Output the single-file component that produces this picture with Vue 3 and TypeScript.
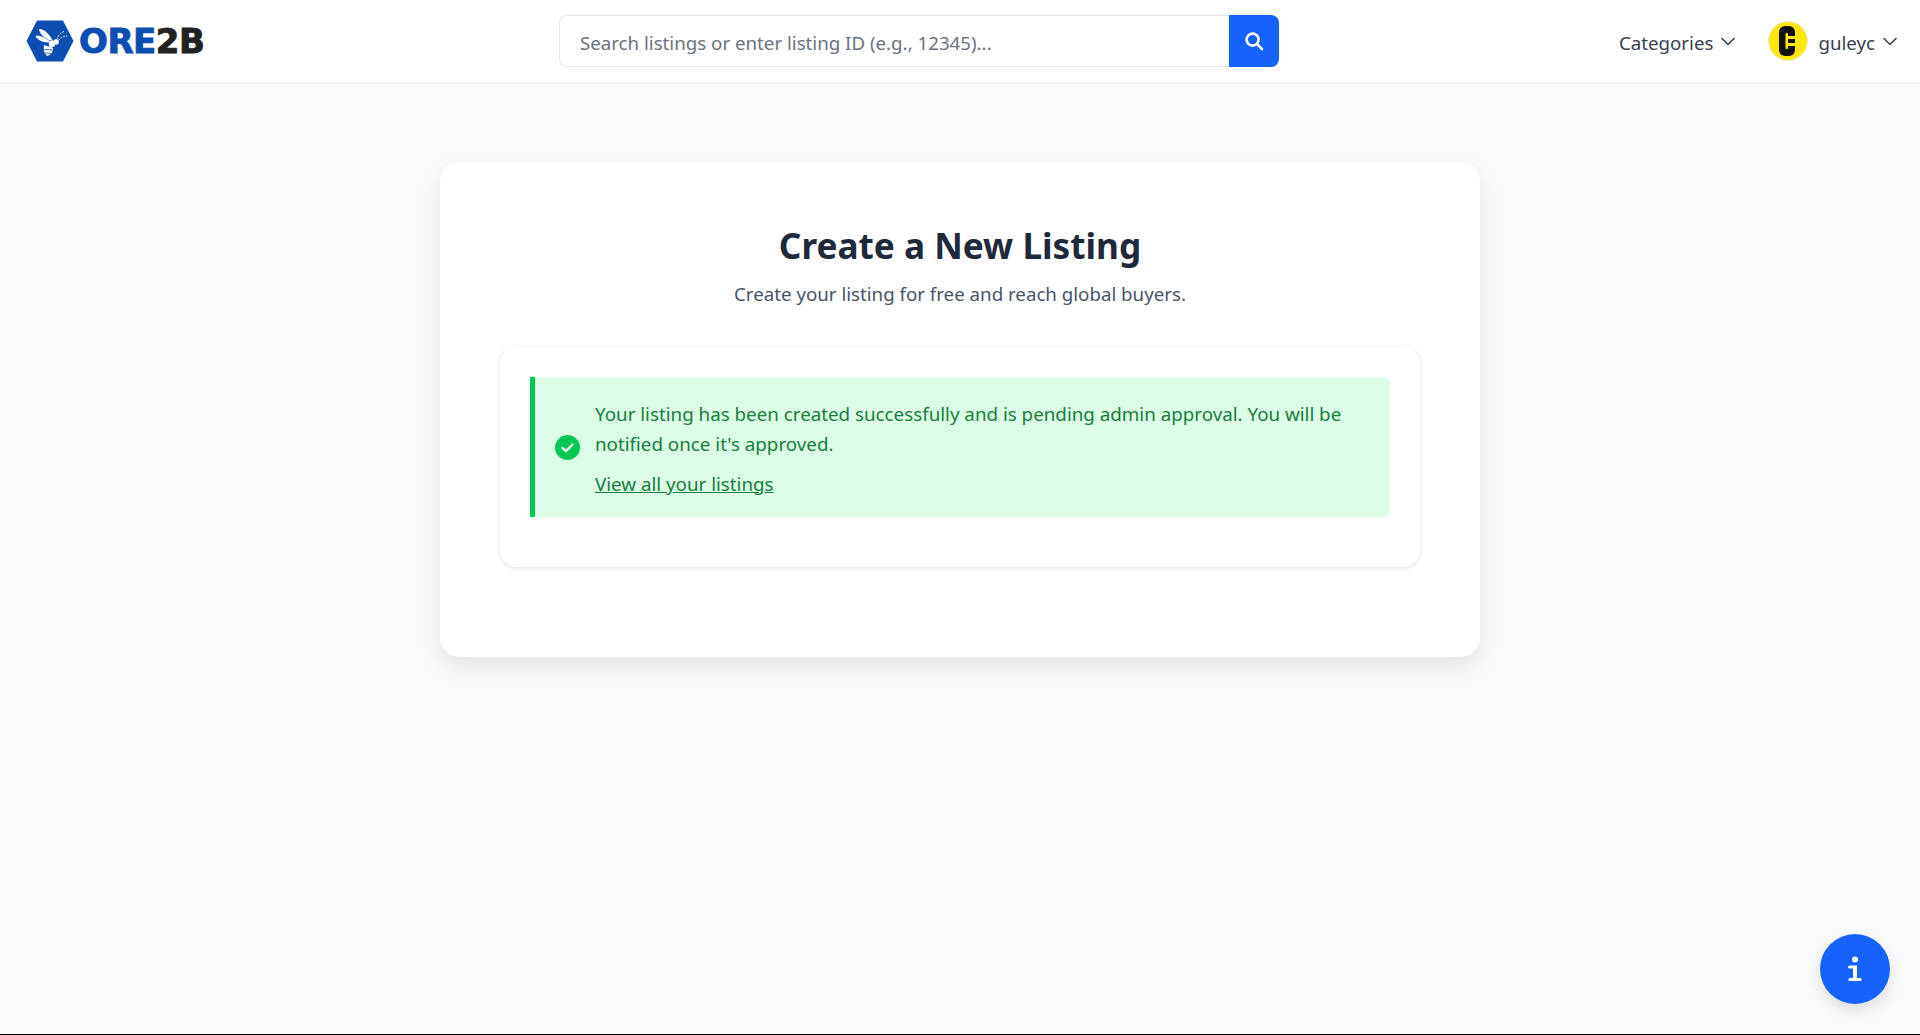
<template>
  <div class="page">
    <header class="topbar">
      <a class="logo" href="#">
        <svg class="logo-mark" width="48" height="42" viewBox="0 0 48 42">
          <path d="M11 0.500h26l10.500 20.500-10.500 20.500H11L0.500 21z" fill="#0b4db0" />
          <path d="M13 9c4-1 11 5 14 12-6-1-13-5-14-12z" fill="#fff" />
          <path d="M9.500 16c4.500-1 10.500 2 15.500 6-6 1.500-13-1-15.500-6z" fill="#fff" />
          <path d="M18 25c3 1 8 2 9 3 0 4-2 7-6 8-3-3-4-7-3-11z" fill="#fff" />
          <path d="M18.500 29.500l8 0.500M19.500 33l5.500 0.500" stroke="#0b4db0" stroke-width="0.8" />
          <circle cx="26" cy="24" r="3.200" fill="#fff" />
          <circle cx="30" cy="22" r="2.800" fill="#fff" />
          <path d="M31 19.500c1-4 4-7 8-8.500M32.500 20.500c1.500-2.500 4.500-4.500 8.500-4.500" fill="none" stroke="#fff" stroke-width="0.9" stroke-dasharray="2 1" />
        </svg>
        <span class="logo-text"><span class="logo-blue">ORE</span><span class="logo-dark">2B</span></span>
      </a>
      <form class="search" @submit.prevent>
        <input class="search-input" type="text" placeholder="Search listings or enter listing ID (e.g., 12345)..." />
        <button class="search-btn" type="submit" aria-label="Search">
          <svg width="20" height="20" viewBox="0 0 20 20" fill="none" stroke="#fff" stroke-width="2.600" stroke-linecap="round">
            <circle cx="8.600" cy="8.600" r="6" />
            <path d="M13.200 13.200 18 18" />
          </svg>
        </button>
      </form>
      <nav class="nav">
        <button class="nav-item" type="button">
          <span class="nav-label">Categories</span>
          <svg class="chev" width="14" height="9" viewBox="0 0 14 9"><path d="M1 1.500 7 7.500l6-6" /></svg>
        </button>
        <button class="nav-item user" type="button">
          <svg class="avatar" width="40" height="40" viewBox="0 0 40 40">
            <circle cx="20" cy="20" r="19.500" fill="#ffe900" stroke="#e5e7eb" />
            <rect x="11" y="5" width="16" height="30" rx="6" fill="#111" />
            <rect x="17.500" y="12" width="2.500" height="16" rx="1" fill="#ffe900" />
            <rect x="20" y="15" width="7" height="3" fill="#ffe900" />
            <rect x="20" y="22" width="7" height="3" fill="#ffe900" />
          </svg>
          <span class="nav-label">guleyc</span>
          <svg class="chev" width="14" height="9" viewBox="0 0 14 9"><path d="M1 1.500 7 7.500l6-6" /></svg>
        </button>
      </nav>
    </header>

    <main class="main">
      <section class="panel">
        <h1 class="title">Create a New Listing</h1>
        <p class="subtitle">Create your listing for free and reach global buyers.</p>
        <div class="inner">
          <div class="alert">
            <svg class="alert-icon" width="25" height="25" viewBox="0 0 25 25">
              <circle cx="12.500" cy="12.500" r="12.500" fill="#00c853" />
              <path d="M7.500 13l3.400 3.200 6.600-6.700" fill="none" stroke="#fff" stroke-width="2.400" stroke-linecap="round" stroke-linejoin="round" />
            </svg>
            <div class="alert-body">
              <p class="alert-text">Your listing has been created successfully and is pending admin approval. You will be notified once it's approved.</p>
              <a class="alert-link" href="#">View all your listings</a>
            </div>
          </div>
        </div>
      </section>
    </main>

    <footer class="footer"></footer>

    <button class="fab" type="button" aria-label="Info">
      <svg width="14" height="26" viewBox="0 0 14 26" fill="#fff">
        <circle cx="7" cy="3.500" r="3" />
        <path d="M1.500 9.500H9v12.500h3.200a1.400 1.400 0 0 1 0 3H1.800a1.400 1.400 0 0 1 0-3H5V12.500H1.500a1.500 1.500 0 0 1 0-3z" />
      </svg>
    </button>
  </div>
</template>

<script setup lang="ts">
</script>

<style>
html,
body {
  margin: 0;
  background: #f9fafb;
}
</style>

<style scoped>
.page {
  display: flex;
  flex-direction: column;
  height: 100vh;
  overflow: hidden;
  background: #f9fafb;
  color: #374151;
  font-family: "Noto Sans", "Open Sans", sans-serif;
}

.topbar {
  position: relative;
  display: flex;
  align-items: center;
  justify-content: space-between;
  flex-shrink: 0;
  height: 82px;
  padding: 0 23px 0 26px;
  box-sizing: border-box;
  background: #fff;
  box-shadow: 0 1px 3px rgba(0, 0, 0, 0.06);
}

.logo {
  display: flex;
  align-items: center;
  gap: 5px;
  width: 180px;
  text-decoration: none;
}

.logo-mark {
  flex-shrink: 0;
}

.logo-text {
  font-family: "DejaVu Sans", sans-serif;
  font-size: 34px;
  font-weight: 700;
  letter-spacing: -0.5px;
  line-height: 1;
  -webkit-text-stroke: 0.9px currentColor;
}

.logo-blue {
  color: #0b4db0;
}

.logo-dark {
  color: #222;
}

.search {
  display: flex;
  width: 720px;
  height: 52px;
  margin-left: 13px;
}

.search-input {
  flex: 1;
  min-width: 0;
  padding: 2px 20px 0;
  border: 1px solid #e5e7eb;
  border-right: 0;
  border-radius: 8px 0 0 8px;
  outline: none;
  background: #fff;
  color: #374151;
  font: inherit;
  font-size: 18.72px;
}

.search-input::placeholder {
  color: #6b7280;
  opacity: 1;
}

.search-btn {
  display: flex;
  align-items: center;
  justify-content: center;
  width: 50px;
  padding: 0;
  border: 0;
  border-radius: 0 8px 8px 0;
  background: #1761fd;
  cursor: pointer;
}

.nav {
  display: flex;
  align-items: center;
  gap: 33px;
}

.nav-item {
  display: flex;
  align-items: center;
  gap: 8px;
  padding: 0;
  border: 0;
  background: none;
  color: #374151;
  font: inherit;
  font-size: 18.72px;
  cursor: pointer;
}

.nav-label {
  padding-top: 2px;
}

.user {
  gap: 10px;
}

.user .chev {
  margin-left: -2px;
}

.chev {
  fill: none;
  stroke: #374151;
  stroke-width: 1.6;
  stroke-linecap: round;
  stroke-linejoin: round;
}

.main {
  flex: 1;
  min-height: 0;
  padding-top: 80px;
}

.panel {
  width: 1040px;
  height: 495px;
  margin: 0 auto;
  padding: 60px 60px 0;
  box-sizing: border-box;
  border-radius: 20px;
  background: #fff;
  box-shadow: 0 10px 25px rgba(0, 0, 0, 0.09);
  text-align: center;
}

.title {
  margin: 0;
  color: #1e293b;
  font-size: 35.2px;
  font-weight: 700;
  line-height: 47px;
}

.subtitle {
  margin: 10px 0 0;
  color: #475569;
  font-size: 18.72px;
  line-height: 30px;
}

.inner {
  margin-top: 38px;
  padding: 30px 30px 50px;
  border-radius: 16px;
  background: #fff;
  box-shadow: 0 1px 4px rgba(0, 0, 0, 0.14);
  text-align: left;
}

.alert {
  display: flex;
  align-items: center;
  gap: 15px;
  height: 140px;
  padding: 0 20px;
  box-sizing: border-box;
  border-left: 5px solid #00c853;
  border-radius: 0 6px 6px 0;
  background: #dcfce7;
  color: #15803d;
}

.alert-icon {
  flex-shrink: 0;
}

.alert-body {
  min-width: 0;
  padding-top: 3px;
}

.alert-text {
  margin: 0;
  font-size: 18.77px;
  line-height: 30px;
}

.alert-link {
  display: inline-block;
  margin-top: 10px;
  color: #15803d;
  font-size: 18.77px;
  line-height: 30px;
}

.footer {
  flex-shrink: 0;
  height: 1px;
  background: #000;
}

.fab {
  position: fixed;
  right: 30px;
  bottom: 31px;
  display: flex;
  align-items: center;
  justify-content: center;
  width: 70px;
  height: 70px;
  padding: 0;
  border: 0;
  border-radius: 50%;
  background: #1761fd;
  box-shadow: 0 6px 16px rgba(0, 0, 0, 0.12);
  cursor: pointer;
}
</style>
